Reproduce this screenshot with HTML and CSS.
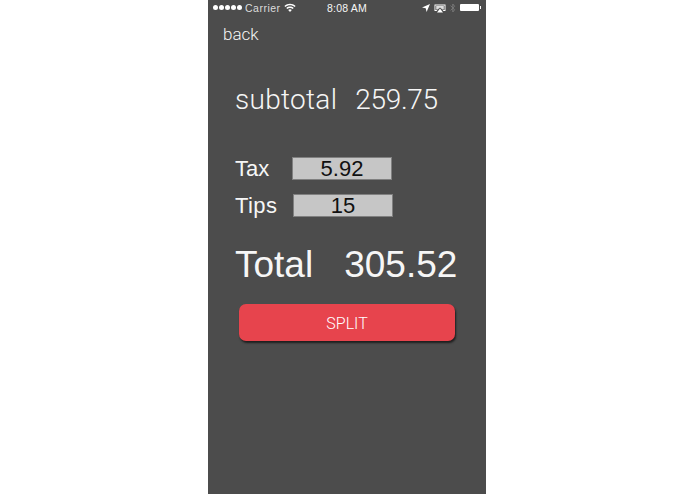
FILE: index.html
```html
<!DOCTYPE html>
<html lang="en">
<head>
    <meta charset="UTF-8">
    <title>Split</title>
    <link rel="stylesheet" href="styles.css">
</head>
<body>
    <div class="phone">
        <div class="status-bar">
            <div class="status-left">
                <span class="signal"><i></i><i></i><i></i><i></i><i></i></span>
                <span class="carrier">Carrier</span>
                <svg class="wifi" width="12" height="9" viewBox="0 0 12 9">
                    <path d="M0.4 2.9C3.6 -0.1 8.4 -0.1 11.6 2.9L10.6 4C8 1.6 4 1.6 1.4 4Z" fill="#fff"/>
                    <path d="M2.3 4.9C4.4 3 7.6 3 9.7 4.9L8.7 6C7.2 4.7 4.8 4.7 3.3 6Z" fill="#fff"/>
                    <path d="M4.2 6.9C5.2 6 6.8 6 7.8 6.9L6 8.9Z" fill="#fff"/>
                </svg>
            </div>
            <div class="status-time">8:08 AM</div>
            <div class="status-right">
                <svg width="8" height="8" viewBox="0 0 8 8"><path d="M8 0L4.6 8L3.7 4.3L0 3.4Z" fill="#fff"/></svg>
                <svg class="airplay" width="12" height="9" viewBox="0 0 12 9">
                    <path d="M0.5 0.5H11.5V7H9.5L8.6 6.1H10.6V1.4H1.4V6.1H3.4L2.5 7H0.5Z" fill="#fff"/>
                    <path d="M2.2 2H9.8V5.6H8.4L6 3.4L3.6 5.6H2.2Z" fill="#ddd"/>
                    <path d="M6 4.6L9 8.5H3Z" fill="#fff"/>
                </svg>
                <svg width="6" height="10" viewBox="0 0 6 10"><path d="M0.6 2.6L4.6 6.8L2.8 9V1L4.6 3.2L0.6 7.4" fill="none" stroke="#7c7c7c" stroke-width="0.9"/></svg>
                <div class="battery"></div>
            </div>
        </div>

        <div class="back">back</div>

        <div class="subtotal">
            <span class="subtotal-label">subtotal</span>
            <span class="subtotal-value">259.75</span>
        </div>

        <div class="field first">
            <label>Tax</label>
            <div class="input">5.92</div>
        </div>
        <div class="field second">
            <label>Tips</label>
            <div class="input">15</div>
        </div>

        <div class="total">
            <span>Total</span>
            <span>305.52</span>
        </div>

        <button class="split-btn">SPLIT</button>
    </div>
</body>
</html>
```

FILE: styles.css
```css
/* Page and phone frame */
body, html {
    margin: 0;
    padding: 0;
    height: 100%;
    overflow: hidden;
    background-color: #ffffff;
}

.phone {
    width: 278px;
    height: 494px;
    margin-left: 208px;
    background-color: #4c4c4c;
    color: #f6f6f6;
    font-family: 'Liberation Sans', Arial, sans-serif;
    overflow: hidden;
}

/* Status bar */
.status-bar {
    display: grid;
    grid-template-columns: 1fr auto 1fr;
    align-items: center;
    height: 15px;
    padding: 0 5px;
    font-size: 10.5px;
}

.status-left, .status-right {
    display: flex;
    align-items: center;
}

.status-left {
    gap: 3px;
}

.status-right {
    justify-content: flex-end;
    gap: 4px;
}

.signal {
    display: flex;
    gap: 1px;
}

.signal i {
    display: block;
    width: 5px;
    height: 5px;
    border-radius: 50%;
    background-color: #ffffff;
}

.carrier {
    color: #dddddd;
    letter-spacing: 0.5px;
}

.status-time {
    font-size: 10.5px;
    letter-spacing: 0.2px;
}

.airplay {
    margin-top: 2px;
}

.battery {
    width: 19px;
    height: 7px;
    margin-right: 2px;
    background-color: #ffffff;
    border-radius: 1px;
    position: relative;
}

.battery::after {
    content: "";
    position: absolute;
    right: -2px;
    top: 2px;
    width: 1px;
    height: 3px;
    background-color: #ffffff;
}

/* Content */
.back {
    margin: 9px 0 0 15px;
    font-family: 'Roboto', sans-serif;
    font-weight: 300;
    font-size: 17px;
    line-height: 20px;
    color: #f6f6f6;
}

.subtotal {
    display: flex;
    gap: 18px;
    margin: 40px 0 0 27px;
    font-family: 'Roboto', sans-serif;
    font-weight: 300;
    font-size: 28px;
    line-height: 32px;
}

.subtotal-label {
    letter-spacing: 0.3px;
}

.subtotal-value {
    letter-spacing: -0.3px;
}

.field {
    display: flex;
    align-items: center;
    margin-left: 27px;
    height: 23px;
    font-size: 22px;
}

.field.first {
    margin-top: 41px;
}

.field.second {
    margin-top: 14px;
}

.field label {
    width: 57px;
}

.field.second label {
    width: 58px;
    letter-spacing: 0.4px;
}

.input {
    width: 98px;
    height: 21px;
    line-height: 22px;
    border: 1px solid #808080;
    background-color: #c6c6c6;
    color: #111111;
    text-align: center;
    font-size: 22px;
}

.total {
    display: flex;
    gap: 32px;
    margin: 26px 0 0 27px;
    font-size: 37px;
    line-height: 44px;
}

.total span:last-child {
    margin-left: -1px;
}

.split-btn {
    display: block;
    width: 216px;
    height: 37px;
    margin: 17px 0 0 31px;
    padding: 2px 0 0;
    border: none;
    border-radius: 7px;
    background-color: #e7444d;
    color: #ffffff;
    font-family: 'Roboto', sans-serif;
    font-weight: 300;
    font-size: 16px;
    box-shadow: 1px 2px 2px #1e1e1e;
}
```
